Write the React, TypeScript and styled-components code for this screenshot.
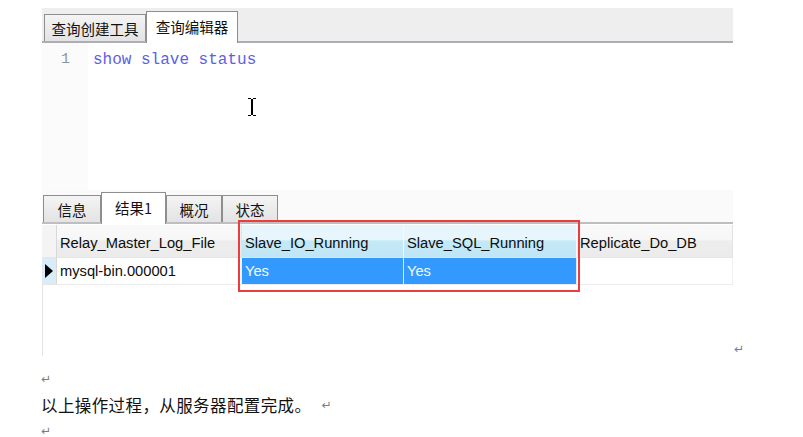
import React from "react";
import styled, { createGlobalStyle, css } from "styled-components";

const Global = createGlobalStyle`
  html, body { margin: 0; padding: 0; background: #ffffff; }
  body { width: 803px; height: 437px; overflow: hidden; }
`;

const Page = styled.div`
  padding: 8px 0 0 42px;
  font-family: "Noto Sans CJK SC", "Liberation Sans", sans-serif;
`;

const FirstLine = styled.div`
  display: flex;
  align-items: flex-end;
`;

const Shot = styled.div`
  width: 691px;
  display: flex;
  flex-direction: column;
`;

const TopBar = styled.div`
  height: 33px;
  background: #eeeeee;
  border-bottom: 2px solid #adadb3;
  display: flex;
  align-items: flex-end;
  padding-left: 2px;
`;

const Tab = styled.div<{ $active?: boolean; $w: number }>`
  width: ${(p) => p.$w}px;
  box-sizing: border-box;
  border: 1px solid #8e8e8e;
  border-bottom: none;
  font-family: "Noto Sans CJK SC", sans-serif;
  font-size: 14.5px;
  color: #111;
  display: flex;
  align-items: center;
  justify-content: center;
  ${(p) =>
    p.$active
      ? css`
          height: 32px;
          margin-bottom: -2px;
          background: #ffffff;
          padding-bottom: 3px;
        `
      : css`
          height: 27px;
          background: linear-gradient(#f4f4f4, #e3e3e3);
        `}
`;

const Editor = styled.div`
  height: 147px;
  display: flex;
  position: relative;
  background: #ffffff;
`;

const Gutter = styled.div`
  width: 46px;
  background: #fbfbfb;
  color: #8b95a6;
  font-family: "Liberation Mono", monospace;
  font-size: 15px;
  text-align: right;
  padding: 8px 18px 0 0;
  box-sizing: border-box;
`;

const Code = styled.div`
  padding: 8px 0 0 5px;
  font-family: "Liberation Mono", monospace;
  font-size: 16px;
  color: #5e5ee8;
`;

const Cursor = styled.svg`
  position: absolute;
  left: 205px;
  top: 54px;
`;

const BottomBar = styled.div`
  height: 32px;
  background: #fafafa;
  border-top: 1px solid #ededed;
  border-bottom: 2px solid #bdbdc2;
  display: flex;
  align-items: flex-end;
  padding-left: 1px;
  margin-top: -1px;
`;

const Grid = styled.div`
  position: relative;
  padding-top: 1px;
  display: flex;
  flex-direction: column;
  font-family: "Liberation Sans", Arial, sans-serif;
  font-size: 14.7px;
  color: #0d0d0d;
`;

const Row = styled.div<{ $h: number }>`
  display: grid;
  grid-template-columns: 15px 185px 162px 173px 156px;
  height: ${(p) => p.$h}px;
`;

const HeadCell = styled.div<{ $sel?: boolean }>`
  display: flex;
  align-items: center;
  padding: 3px 0 0 3px;
  box-sizing: border-box;
  border-right: 1px solid #e2e2e2;
  border-bottom: 1px solid #e6e6e6;
  white-space: nowrap;
  overflow: hidden;
  background: ${(p) =>
    p.$sel
      ? "linear-gradient(#e6f6fc 0%, #e6f6fc 45%, #c4e9f8 50%, #bfe6f6 100%)"
      : "linear-gradient(#f9f9f9 0%, #f7f7f7 45%, #ededed 50%, #ebebeb 100%)"};
  ${(p) => p.$sel && css`border-right-color: #f4fbff;`}
`;

const Cell = styled.div<{ $sel?: boolean }>`
  display: flex;
  align-items: center;
  padding-left: 3px;
  box-sizing: border-box;
  white-space: nowrap;
  border-right: 1px solid ${(p) => (p.$sel ? "#d8ebff" : "#f0f0f0")};
  border-bottom: 1px solid #ececec;
  background: ${(p) => (p.$sel ? "#3399ff" : "#ffffff")};
  color: ${(p) => (p.$sel ? "#f4f9ff" : "#0d0d0d")};
`;

const Indicator = styled.div<{ $blue?: boolean }>`
  display: flex;
  align-items: center;
  justify-content: center;
  border-right: 1px solid #d8d8d8;
  border-bottom: 1px solid #e6e6e6;
  background: ${(p) => (p.$blue ? "#d9ecf7" : "#f4f4f4")};
`;

const Blank = styled.div`
  height: 71px;
  border-left: 1px solid #e4e4e4;
`;

const Highlight = styled.div`
  position: absolute;
  left: 196px;
  top: -4px;
  width: 338px;
  height: 68px;
  border: 2px solid #ee3b3b;
  pointer-events: none;
`;

const Mark = styled.span`
  font-family: "DejaVu Sans", sans-serif;
  font-size: 12px;
  letter-spacing: 0;
  color: #7d7d7d;
  line-height: 1;
`;

const EndMark = styled(Mark)`
  margin: 0 0 0 1px;
  padding-bottom: 1px;
`;

const Para = styled.div`
  height: 26px;
  display: flex;
  align-items: center;
  font-family: "Noto Sans CJK SC", serif;
  font-size: 16.5px;
  letter-spacing: 0.4px;
  text-spacing-trim: space-all;
  color: #111;
  gap: 10px;
`;

const Doc = styled.div`
  padding-top: 10px;
  margin-left: -1px;
`;

export default function App() {
  return (
    <>
      <Global />
      <Page>
        <FirstLine>
          <Shot>
            <TopBar>
              <Tab $w={102}>查询创建工具</Tab>
              <Tab $active $w={92}>查询编辑器</Tab>
            </TopBar>
            <Editor>
              <Gutter>1</Gutter>
              <Code>show slave status</Code>
              <Cursor width="10" height="20" viewBox="0 0 10 20">
                <path d="M1 1h3v1h2V1h3v1H6v16h3v1H6v-1H4v1H1v-1h3V2H1z" fill="#000" />
              </Cursor>
            </Editor>
            <BottomBar>
              <Tab $w={58}>信息</Tab>
              <Tab $active $w={65}>结果1</Tab>
              <Tab $w={56}>概况</Tab>
              <Tab $w={56}>状态</Tab>
            </BottomBar>
            <Grid>
              <Row $h={33}>
                <Indicator />
                <HeadCell>Relay_Master_Log_File</HeadCell>
                <HeadCell $sel>Slave_IO_Running</HeadCell>
                <HeadCell $sel>Slave_SQL_Running</HeadCell>
                <HeadCell>Replicate_Do_DB</HeadCell>
              </Row>
              <Row $h={27}>
                <Indicator $blue>
                  <svg width="8" height="14" viewBox="0 0 8 14">
                    <path d="M0 0L8 7L0 14Z" fill="#000" />
                  </svg>
                </Indicator>
                <Cell>mysql-bin.000001</Cell>
                <Cell $sel>Yes</Cell>
                <Cell $sel>Yes</Cell>
                <Cell />
              </Row>
              <Highlight />
            </Grid>
            <Blank />
          </Shot>
          <EndMark>↵</EndMark>
        </FirstLine>
        <Doc>
          <Para lang="zh-CN"><Mark>↵</Mark></Para>
          <Para lang="zh-CN">以上操作过程，从服务器配置完成。<Mark>↵</Mark></Para>
          <Para lang="zh-CN"><Mark>↵</Mark></Para>
        </Doc>
      </Page>
    </>
  );
}
